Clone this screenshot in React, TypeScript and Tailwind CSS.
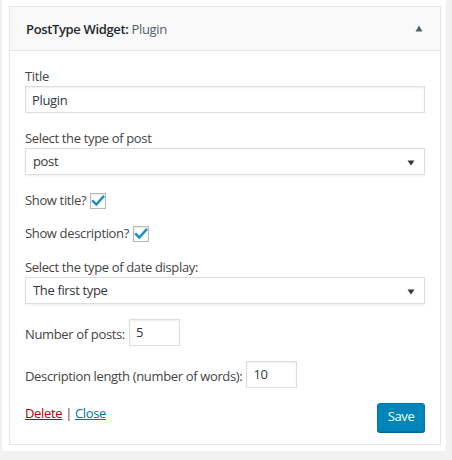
import { useState } from "react"

const font = { fontFamily: '"Open Sans", "Noto Sans", sans-serif' }

const Check = ({ checked, onToggle }: { checked: boolean; onToggle: () => void }) => (
    <span
        className="ml-[4px] inline-flex w-[16px] h-[16px] border border-[#b4b9be] bg-white shadow-[inset_0_1px_2px_rgba(0,0,0,0.1)] items-center justify-center cursor-pointer"
        onClick={onToggle}
    >
        {checked && (
            <svg width="14" height="12" viewBox="0 0 14 12">
                <path d="M2 6.2 L5.3 9.5 L12.2 1.8" stroke="#1e8cbe" strokeWidth="2.4" fill="none" strokeLinecap="square" />
            </svg>
        )}
    </span>
)

const Arrow = () => (
    <svg width="8" height="6" viewBox="0 0 8 6" className="absolute right-[9px] top-[11px]">
        <path d="M0.5 0.5 H7.5 L4 5.5 Z" fill="#32373c" />
    </svg>
)

const App = () => {
    const [title, setTitle] = useState('Plugin')
    const [showTitle, setShowTitle] = useState(true)
    const [showDesc, setShowDesc] = useState(true)
    const [count, setCount] = useState('5')
    const [words, setWords] = useState('10')

    return (
        <div className="w-[452px] h-[460px] bg-[#f1f1f1]" style={font}>
            <div className="ml-[2px] w-[444px] h-[451px] bg-white pt-[6px] pl-[7px]">
                <div className="w-[432px] border border-[#e5e5e5] bg-white text-[13px] tracking-[-0.35px] text-[#444]">
                    <div className="h-[44px] bg-[#f9f9f9] border-b border-[#e5e5e5] flex items-center justify-between pl-[16px] pr-[17px]">
                        <div className="text-[#23282d] pt-[2px]">
                            <span className="font-semibold">PostType Widget:</span> <span className="text-[#555d66]">Plugin</span>
                        </div>
                        <svg width="8" height="7" viewBox="0 0 8 7">
                            <path d="M4 0.5 L7.5 6.5 H0.5 Z" fill="#555d66" />
                        </svg>
                    </div>

                    <div className="px-[15px] pt-[16px] pb-[12px]">
                        <div className="h-[19px] leading-[19px]">Title</div>
                        <input
                            className="block w-full h-[27px] border border-[#ddd] shadow-[inset_0_1px_2px_rgba(0,0,0,0.07)] px-[6px] text-[13px] text-[#32373c] outline-none"
                            value={title}
                            onChange={e => setTitle(e.target.value)}
                        />

                        <div className="mt-[16px] h-[19px] leading-[19px]">Select the type of post</div>
                        <div className="relative h-[27px] border border-[#ddd] shadow-[0_1px_2px_rgba(0,0,0,0.07)] px-[7px] flex items-center text-[#32373c]">
                            post
                            <Arrow />
                        </div>

                        <div className="mt-[18px] h-[16px] flex items-center">
                            Show title?
                            <Check checked={showTitle} onToggle={() => setShowTitle(!showTitle)} />
                        </div>
                        <div className="mt-[17px] h-[16px] flex items-center">
                            Show description?
                            <Check checked={showDesc} onToggle={() => setShowDesc(!showDesc)} />
                        </div>

                        <div className="mt-[16px] h-[19px] leading-[19px]">Select the type of date display:</div>
                        <div className="relative h-[27px] border border-[#ddd] shadow-[0_1px_2px_rgba(0,0,0,0.07)] px-[7px] flex items-center text-[#32373c]">
                            The first type
                            <Arrow />
                        </div>

                        <div className="mt-[15px] flex items-center">
                            <span className="pt-[4px]">Number of posts:</span>
                            <input
                                className="ml-[4px] w-[51px] h-[27px] border border-[#ddd] shadow-[inset_0_1px_2px_rgba(0,0,0,0.07)] px-[6px] pb-[2px] text-[13px] text-[#32373c] outline-none"
                                value={count}
                                onChange={e => setCount(e.target.value)}
                            />
                        </div>
                        <div className="mt-[15px] flex items-center">
                            <span className="pt-[4px]">Description length (number of words):</span>
                            <input
                                className="ml-[4px] w-[51px] h-[27px] border border-[#ddd] shadow-[inset_0_1px_2px_rgba(0,0,0,0.07)] px-[6px] pb-[2px] text-[13px] text-[#32373c] outline-none"
                                value={words}
                                onChange={e => setWords(e.target.value)}
                            />
                        </div>

                        <div className="mt-[15px] flex justify-between items-start">
                            <div className="pt-[1px] leading-[18px]">
                                <a href="#" className="text-[#a00] underline">Delete</a> | <a href="#" className="text-[#0073aa] underline">Close</a>
                            </div>
                            <button className="w-[48px] h-[29px] bg-[#0085ba] border border-[#0073aa] rounded-[3px] shadow-[0_1px_0_#006799] text-white text-[13px] pb-[1px]">Save</button>
                        </div>
                    </div>
                </div>
            </div>
        </div>
    )
}

export default App
